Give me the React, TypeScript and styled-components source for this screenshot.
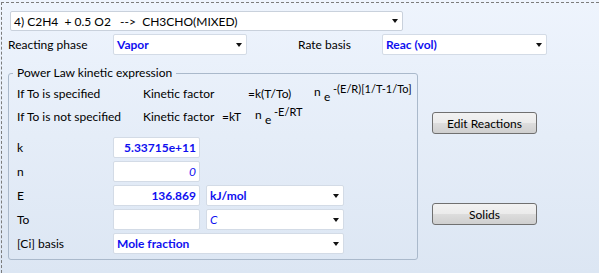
import React from "react";
import styled, { createGlobalStyle } from "styled-components";

const Global = createGlobalStyle`
  html, body { margin: 0; padding: 0; }
  body {
    width: 599px;
    height: 273px;
    overflow: hidden;
    background: linear-gradient(to bottom, #eef4fd 0%, #dce6f3 100%);
    font-family: Lato, "Segoe UI", "Open Sans", sans-serif;
    font-size: 12px;
    color: #000;
  }
`;

const Frame = styled.div`
  margin: 2px 0 0 1px;
  border-top: 1px dashed #7c7c7c;
  border-left: 1px dashed #7c7c7c;
  padding: 8px 0 0 6px;
  height: 271px;
  box-sizing: border-box;
  overflow: hidden;
`;

const Box = styled.div<{ $w?: number; $h?: number }>`
  box-sizing: border-box;
  width: ${(p) => (p.$w ? `${p.$w}px` : "auto")};
  height: ${(p) => p.$h ?? 21}px;
  background: #fff;
  border: 1px solid #d3dbe6;
  border-radius: 2px;
  display: flex;
  align-items: center;
  padding: 0 3px 0 3px;
  white-space: nowrap;
`;

const Value = styled.span<{ $bold?: boolean; $italic?: boolean; $blue?: boolean }>`
  flex: 1;
  font-weight: ${(p) => (p.$bold ? 700 : 400)};
  font-style: ${(p) => (p.$italic ? "italic" : "normal")};
  color: ${(p) => (p.$blue ? "#0f0ff0" : "#000")};
`;

const NumText = styled(Value)`
  text-align: right;
`;

const Caret = styled.span`
  width: 0;
  height: 0;
  border-left: 3px solid transparent;
  border-right: 3px solid transparent;
  border-top: 4px solid #111;
  margin-left: 4px;
  margin-right: 1px;
`;

const TopCombo = styled(Box)`
  margin-left: 2px;
  border-color: #c9d1dc;
`;

const PhaseRow = styled.div`
  display: grid;
  grid-template-columns: 105px 134px 51px 84px 165px;
  align-items: center;
  margin-top: 3px;
  height: 20px;
`;

const Label = styled.span`
  white-space: nowrap;
`;

const Main = styled.div`
  display: flex;
  margin-top: 11px;
`;

const Group = styled.fieldset`
  box-sizing: border-box;
  width: 410px;
  margin: 0;
  padding: 0 0 5px 4px;
  border: 1px solid #aab9cb;
  border-radius: 3px;
  min-width: 0;
`;

const Legend = styled.legend`
  padding: 0 4px;
  line-height: 16px;
  font-size: 12px;
`;

const GroupBody = styled.div`
  padding-left: 4px;
`;

const FormulaRow = styled.div`
  display: flex;
  align-items: center;
  height: 23px;
  white-space: nowrap;
  &:first-child { margin-top: 1px; }
`;

const Cell = styled.span<{ $w: number }>`
  width: ${(p) => p.$w}px;
  flex: none;
`;

const Sup = styled.span<{ $w?: number; $shift: number; $size?: number }>`
  width: ${(p) => (p.$w ? `${p.$w}px` : "auto")};
  flex: none;
  font-size: ${(p) => p.$size ?? 12}px;
  position: relative;
  top: ${(p) => -p.$shift}px;
`;

const Fields = styled.div`
  display: grid;
  grid-template-columns: 90px 87px 138px;
  column-gap: 6px;
  row-gap: 3px;
  grid-auto-rows: 21px;
  align-items: center;
  margin-top: 9px;
`;

const Wide = styled(Box)`
  grid-column: 2 / span 2;
`;

const Side = styled.div`
  display: flex;
  flex-direction: column;
  margin-left: 14px;
  padding-top: 47px;
`;

const Button = styled.button<{ $gap?: number }>`
  box-sizing: border-box;
  width: 105px;
  height: 22px;
  margin-top: ${(p) => p.$gap ?? 0}px;
  border: 1px solid #707070;
  border-radius: 3px;
  background: linear-gradient(to bottom, #f2f2f2 0%, #ebebeb 50%, #dddddd 51%, #cfcfcf 100%);
  font-family: inherit;
  font-size: 12px;
  color: #000;
  padding: 0;
`;

function Combo(props: { w?: number; text: string; bold?: boolean; italic?: boolean; blue?: boolean }) {
  return (
    <Box $w={props.w}>
      <Value $bold={props.bold} $italic={props.italic} $blue={props.blue}>{props.text}</Value>
      <Caret />
    </Box>
  );
}

export default function App() {
  return (
    <>
      <Global />
      <Frame>
        <TopCombo $w={393} $h={20}>
          <Value>4) C2H4&nbsp; + 0.5 O2 &nbsp; --&gt; &nbsp;CH3CHO(MIXED)</Value>
          <Caret />
        </TopCombo>
        <PhaseRow>
          <Label>Reacting phase</Label>
          <Combo text="Vapor" bold blue />
          <span />
          <Label>Rate basis</Label>
          <Combo text="Reac (vol)" bold blue />
        </PhaseRow>
        <Main>
          <Group>
            <Legend>Power Law kinetic expression</Legend>
            <GroupBody>
              <FormulaRow>
                <Cell $w={126}>If To is specified</Cell>
                <Cell $w={105}>Kinetic factor</Cell>
                <Cell $w={66}>=k(T/To)</Cell>
                <Sup $w={10} $shift={2}>n</Sup>
                <Sup $w={9} $shift={-3}>e</Sup>
                <Sup $shift={5} $size={11}>-(E/R)[1/T-1/To]</Sup>
              </FormulaRow>
              <FormulaRow>
                <Cell $w={126}>If To is not specified</Cell>
                <Cell $w={79}>Kinetic factor</Cell>
                <Cell $w={33}>=kT</Cell>
                <Sup $w={10} $shift={2}>n</Sup>
                <Sup $w={9} $shift={-3}>e</Sup>
                <Sup $shift={5} $size={11}>-E/RT</Sup>
              </FormulaRow>
              <Fields>
                <Label>k</Label>
                <Box><NumText $bold $blue>5.33715e+11</NumText></Box>
                <span />
                <Label>n</Label>
                <Box><NumText $italic $blue>0</NumText></Box>
                <span />
                <Label>E</Label>
                <Box><NumText $bold $blue>136.869</NumText></Box>
                <Combo text="kJ/mol" bold blue />
                <Label>To</Label>
                <Box />
                <Combo text="C" italic blue />
                <Label>[Ci] basis</Label>
                <Wide>
                  <Value $bold $blue>Mole fraction</Value>
                  <Caret />
                </Wide>
              </Fields>
            </GroupBody>
          </Group>
          <Side>
            <Button>Edit Reactions</Button>
            <Button $gap={69}>Solids</Button>
          </Side>
        </Main>
      </Frame>
    </>
  );
}
